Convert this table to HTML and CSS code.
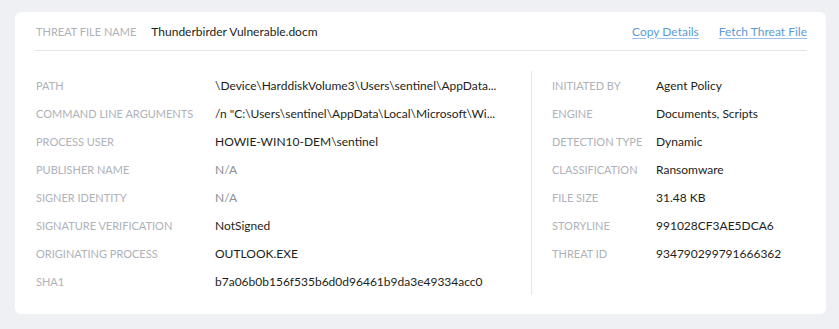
FILE: index.html
```html
<!DOCTYPE html>
<html>
<head>
<meta charset="utf-8">
<link rel="stylesheet" href="styles.css">
</head>
<body>
<div class="card">
  <div class="header">
    <div class="title">
      <span class="label">THREAT FILE NAME</span>
      <span class="value">Thunderbirder Vulnerable.docm</span>
    </div>
    <div class="links">
      <a class="link">Copy Details</a>
      <a class="link">Fetch Threat File</a>
    </div>
  </div>
  <div class="body">
    <div class="col left">
      <div class="row"><span class="label">PATH</span><span class="value">\Device\HarddiskVolume3\Users\sentinel\AppData...</span></div>
      <div class="row"><span class="label">COMMAND LINE ARGUMENTS</span><span class="value">/n "C:\Users\sentinel\AppData\Local\Microsoft\Wi...</span></div>
      <div class="row"><span class="label">PROCESS USER</span><span class="value">HOWIE-WIN10-DEM\sentinel</span></div>
      <div class="row"><span class="label">PUBLISHER NAME</span><span class="value muted">N/A</span></div>
      <div class="row"><span class="label">SIGNER IDENTITY</span><span class="value muted">N/A</span></div>
      <div class="row"><span class="label">SIGNATURE VERIFICATION</span><span class="value">NotSigned</span></div>
      <div class="row"><span class="label">ORIGINATING PROCESS</span><span class="value">OUTLOOK.EXE</span></div>
      <div class="row"><span class="label">SHA1</span><span class="value">b7a06b0b156f535b6d0d96461b9da3e49334acc0</span></div>
    </div>
    <div class="col right">
      <div class="row"><span class="label">INITIATED BY</span><span class="value">Agent Policy</span></div>
      <div class="row"><span class="label">ENGINE</span><span class="value">Documents, Scripts</span></div>
      <div class="row"><span class="label">DETECTION TYPE</span><span class="value">Dynamic</span></div>
      <div class="row"><span class="label">CLASSIFICATION</span><span class="value">Ransomware</span></div>
      <div class="row"><span class="label">FILE SIZE</span><span class="value">31.48 KB</span></div>
      <div class="row"><span class="label">STORYLINE</span><span class="value">991028CF3AE5DCA6</span></div>
      <div class="row"><span class="label">THREAT ID</span><span class="value">934790299791666362</span></div>
    </div>
  </div>
</div>
</body>
</html>
```
FILE: styles.css
```css
html, body {
  margin: 0;
  padding: 0;
  background: #eef0f3;
  font-family: Lato, "Open Sans", sans-serif;
}
body {
  padding: 12px 13px 15px 15px;
}
.card {
  background: #ffffff;
  border-radius: 6px;
  padding: 0 19px 19px 20px;
  height: 302px;
  box-sizing: border-box;
}
.header {
  display: flex;
  justify-content: space-between;
  align-items: center;
  height: 38px;
  border-bottom: 1px solid #e3e5e8;
}
.title {
  display: flex;
  align-items: center;
  gap: 15px;
}
.label {
  font-size: 11px;
  color: #aeb2b9;
  padding-left: 1px;
}
.value {
  font-size: 12px;
  color: #1d1e20;
  white-space: nowrap;
}
.value.muted {
  color: #8b8f95;
}
.links {
  display: flex;
  gap: 20px;
}
.link {
  font-size: 12px;
  color: #5b9ad8;
  text-decoration: underline;
  text-decoration-color: #9cc0e8;
  text-underline-offset: 2px;
}
.body {
  display: flex;
  padding-top: 20px;
}
.col {
  display: flex;
  flex-direction: column;
}
.col.left {
  width: 496px;
  border-right: 1px solid #e3e5e8;
}
.col.right {
  padding-left: 19px;
}
.row {
  display: flex;
  align-items: center;
  height: 28px;
}
.left .label {
  width: 179px;
  flex: none;
}
.right .label {
  width: 104px;
  flex: none;
}
```
